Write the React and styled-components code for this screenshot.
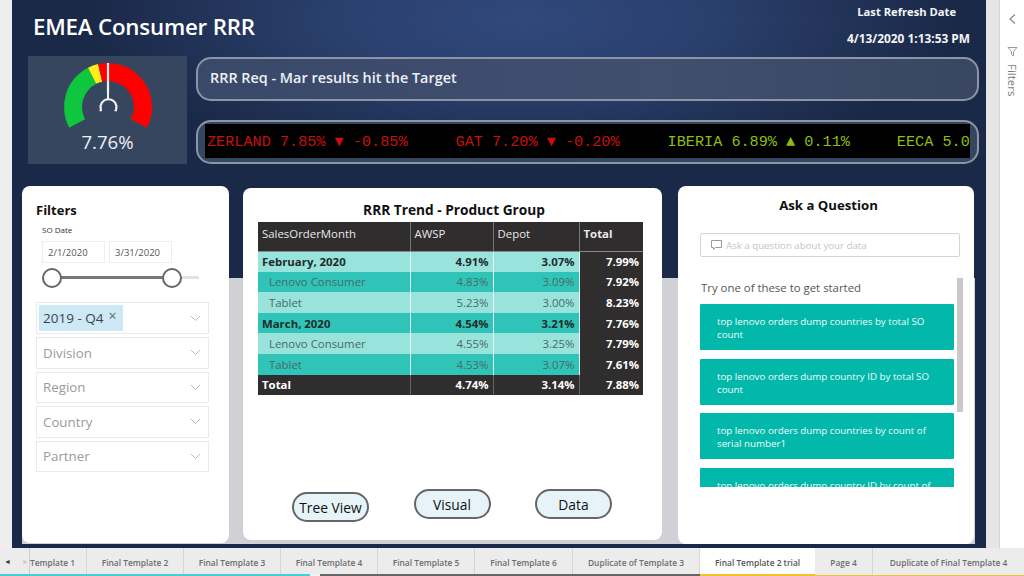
import React from "react";
import styled, { createGlobalStyle } from "styled-components";

const Global = createGlobalStyle`
  html, body { margin: 0; padding: 0; width: 1024px; height: 576px; overflow: hidden; background: #efefef; }
  * { box-sizing: border-box; }
  body { font-family: "Open Sans", "Noto Sans", sans-serif; }
`;

const Page = styled.div`
  width: 1024px; height: 576px; display: flex; flex-direction: column; overflow: hidden;
`;
const Top = styled.div`
  height: 548px; display: flex; flex: none;
`;
const Gutter = styled.div`
  width: 12px; background: #eeeeee; flex: none;
`;
const Report = styled.main`
  width: 974px; flex: none; display: flex; flex-direction: column;
  background: radial-gradient(ellipse 430px 150px at 510px 20px, #30497c 0%, #2a3f6c 45%, #1b2948 100%);
`;
const SidePane = styled.aside`
  width: 38px; flex: none; display: flex; background: #e6e6e6; padding-left: 13px;
`;
const SideInner = styled.div`
  flex: 1; background: #fff; border-left: 1px solid #d4d4d4; display: flex; flex-direction: column;
  align-items: center; padding-top: 13px; color: #777;
`;
const SideLabel = styled.span`
  writing-mode: vertical-rl; font-size: 11.5px; color: #7c7c7c; margin-top: 7px;
`;
const Header = styled.header`
  height: 56px; display: flex; justify-content: space-between; padding: 0 16px 0 21px; flex: none;
`;
const Title = styled.h1`
  margin: 12px 0 0; font-size: 22.3px; line-height: 30px; font-weight: 600; color: #fff; letter-spacing: -0.2px;
`;
const RefreshBlock = styled.div`
  display: flex; flex-direction: column; align-items: flex-end; color: #f4f5f8; font-weight: 700; font-size: 11.2px;
`;
const RefreshLabel = styled.span`
  margin: 5px 14px 0 0; line-height: 14px;
`;
const RefreshValue = styled.span`
  margin-top: 12px; line-height: 14px; font-size: 11.9px;
`;
const KpiRow = styled.section`
  display: flex; gap: 9px; padding: 0 8px 0 16px; height: 108px; flex: none;
`;
const GaugeCard = styled.div`
  width: 159px; flex: none; background: #37465f; display: flex; flex-direction: column; align-items: center;
  padding-top: 6px; color: #eef0f4;
`;
const GaugeValue = styled.div`
  font-size: 18.6px; line-height: 24px; margin-top: -1px; font-weight: 400;
`;
const Banners = styled.div`
  flex: 1; display: flex; flex-direction: column; gap: 19px; padding-top: 1px;
`;
const Pill = styled.div`
  height: 44px; border: 2px solid #8d95a5; border-radius: 15px; display: flex; align-items: center; padding-bottom: 3px;
  background: linear-gradient(90deg, #39496a, #414f6f 60%, #384663);
`;
const PillText = styled.span`
  margin-left: 12px; color: #eef0f4; font-size: 14.4px; font-weight: 600;
`;
const TickerFrame = styled.div`
  height: 44px; border: 2px solid #8d95a5; border-radius: 15px; padding: 2px 7px; display: flex; background: #37465f;
`;
const TickerScreen = styled.div`
  flex: 1; background: #000; display: flex; align-items: center; overflow: hidden; white-space: nowrap; padding-top: 1px;
  font-family: "Liberation Mono", "DejaVu Sans Mono", monospace; height: 34px;
`;
const TickerItem = styled.span`
  color: ${(p) => p.$color}; margin-left: ${(p) => p.$gap}px; flex: none; font-size: 15.2px;
`;
const Body = styled.section`
  height: 362px; margin-top: 22px; padding: 0 11px 4px 10px; display: flex; flex: none;
  background: linear-gradient(to bottom, transparent 92px, #cfd1d5 92px, #cfd1d5 358px, transparent 358px);
  background-size: 953px 100%; background-position: 10px 0; background-repeat: no-repeat;
`;
const Card = styled.div`
  background: #fff; border-radius: 8px; display: flex; flex-direction: column; position: relative;
`;
const FilterCard = styled(Card)`
  width: 207px; height: 357px; padding: 15px 20px 0 14px; flex: none;
`;
const CardHeading = styled.h2`
  margin: 0; font-size: 13px; line-height: 18px; font-weight: 700; color: #111;
`;
const SmallLabel = styled.div`
  font-size: 8px; line-height: 12px; color: #333; margin: 5px 0 0 6px;
`;
const DateRow = styled.div`
  display: flex; gap: 4px; margin: 5px 0 0 6px;
`;
const DateBox = styled.div`
  width: 63px; height: 22px; border: 1px solid #eeeeee; font-size: 9.5px; color: #555; display: flex; align-items: center;
  padding-left: 5px;
`;
const Slider = styled.div`
  height: 20px; width: 157px; margin: 5px 0 0 6px; position: relative; flex: none;
  &::before { content: ""; position: absolute; left: 0; right: 0; top: 8px; height: 3px; background: #e2e2e2; }
  &::after { content: ""; position: absolute; left: 10px; width: 120px; top: 8px; height: 3px; background: #777; }
`;
const Thumb = styled.span`
  position: absolute; left: ${(p) => p.$left}px; top: 0; width: 20px; height: 20px; border-radius: 50%;
  border: 2px solid #666; background: #fff; z-index: 1;
`;
const Drops = styled.div`
  display: flex; flex-direction: column; gap: 3px; margin-top: 14px;
`;
const Drop = styled.div`
  height: ${(p) => p.$h}px; border: 1.5px solid #eaeaea; display: flex; align-items: center; justify-content: space-between;
  padding: 0 7px 0 6px; color: #9a9a9a; font-size: 13.3px;
`;
const Chip = styled.span`
  background: #cce9f5; color: #3a4450; height: 26px; width: 84px; margin-left: -4px; display: flex; align-items: center;
  padding-left: 4px; font-size: 13.5px; gap: 5px;
`;
const ChipX = styled.span`
  font-size: 14px; color: #666; margin-top: -4px; line-height: 14px;
`;
const TableCard = styled(Card)`
  width: 419px; height: 352px; margin: 2px 0 0 14px; padding: 12px 19px 0 15px; flex: none;
`;
const CenterHeading = styled(CardHeading)`
  text-align: center; font-size: 13.7px; line-height: 20px; padding-left: 7px;
`;
const Table = styled.table`
  border-collapse: collapse; table-layout: fixed; width: 385px; margin-top: 2px; font-size: 11.4px;
`;
const HeadCell = styled.th`
  background: #2f2d2d; color: #e8e8e8; font-weight: ${(p) => (p.$bold ? 700 : 400)}; text-align: left; height: 29px;
  padding: 0 0 5px 4px; border-right: 1px solid #777; border-bottom: 1px solid #888; font-size: 11.4px;
  &:last-child { border-right: none; }
`;
const RowCell = styled.td`
  height: 20.6px; padding: 0 4px; text-align: ${(p) => (p.$label ? "left" : "right")};
  padding-left: ${(p) => (p.$indent ? 11 : 4)}px;
  background: ${(p) => (p.$dark ? "#2f2d2d" : p.$shade ? "#30c4b8" : "#98e3db")};
  color: ${(p) => (p.$dark ? "#fff" : p.$strong ? "#1f2b2b" : "#4a6a67")};
  font-weight: ${(p) => (p.$strong || p.$dark ? 700 : 400)};
  white-space: nowrap;
  border-right: ${(p) => (p.$dark ? "1px solid #666" : "1px solid #e8f7f5")};
  &:last-child { border-right: none; }
`;
const Buttons = styled.div`
  margin-top: auto; display: flex; gap: 44.5px; padding: 0 0 18px 34px; align-items: flex-start;
`;
const ViewButton = styled.button`
  width: 77px; height: ${(p) => p.$h}px; margin-top: ${(p) => p.$offset}px; border-radius: 16px; border: 2px solid #666;
  background: #e6f4fa; font-family: inherit; font-size: 13.8px; color: #111; padding: 0;
`;
const AskCard = styled(Card)`
  width: 296px; height: 358px; margin-left: 16px; padding: 10px 20px 0 22px; flex: none;
`;
const AskHeading = styled(CardHeading)`
  text-align: center; line-height: 18px; padding-left: 3px; font-size: 13.2px;
`;
const AskInput = styled.div`
  margin-top: 19px; height: 24px; width: 260px; border: 1.5px solid #d4d4d4; border-radius: 2px; display: flex; align-items: center;
  gap: 3px; padding-left: 9px; font-size: 9.7px; color: #c4c4c4;
`;
const TryLine = styled.div`
  margin-top: 23px; font-size: 11.4px; line-height: 16px; color: #555; padding-left: 1px;
`;
const Scrollbar = styled.span`
  position: absolute; left: 279px; top: 92px; width: 6px; height: 134px; background: #c9c9c9;
`;
const Suggestions = styled.div`
  margin-top: 8px; width: 254px; height: 183px; overflow: hidden; display: flex; flex-direction: column; gap: 8.6px;
`;
const Suggestion = styled.div`
  flex: none; height: 46px; background: #01b8aa; color: #f2fbfa; font-size: 9.75px; line-height: 13px;
  padding: 11px 20px 0 17px; border-radius: 1px;
`;
const Tabs = styled.nav`
  height: 28px; display: flex; flex: none; background: #ececec; position: relative;
  &::before { content: ""; position: absolute; left: 0; right: 0; bottom: 0; height: 1px; background: #f3c22e; z-index: 2; }
  &::after {
    content: ""; position: absolute; left: 0; width: 815px; bottom: 0; height: 2px; z-index: 3;
    background: linear-gradient(90deg, #45cfd2 310px, #f4f4f4 310px, #f4f4f4 320px, #666 320px, #666 700px, #f3c22e 700px);
  }
`;
const Arrows = styled.div`
  width: 30px; flex: none; display: flex; align-items: center; gap: 11px; padding: 0 0 1px 4px; border-right: 1px solid #cfcfcf; font-size: 7px; color: #333;
`;
const ArrowOff = styled.span` color: #c8c8c8; `;
const Tab = styled.div`
  width: ${(p) => p.$w}px; flex: none; display: flex; align-items: center; justify-content: ${(p) => (p.$clip ? "flex-start" : "center")};
  font-size: 8.4px; font-weight: 600;
  color: ${(p) => (p.$active ? "#555" : "#6d6d6d")}; background: ${(p) => (p.$active ? "#fff" : "transparent")};
  border-right: ${(p) => (p.$active ? "none" : "1px solid #d6d6d6")};
  white-space: nowrap;
  &:last-child { border-right: none; }
`;

function Gauge() {
  const cx = 78, cy = 45, R = 44, r = 26;
  const pt = (rad, deg) => {
    const a = (deg * Math.PI) / 180;
    return `${(cx + rad * Math.sin(a)).toFixed(1)} ${(cy - rad * Math.cos(a)).toFixed(1)}`;
  };
  const seg = (from, to, fill) => (
    <path fill={fill} d={`M${pt(r, from)} L${pt(R, from)} A${R} ${R} 0 ${to - from > 180 ? 1 : 0} 1 ${pt(R, to)} L${pt(r, to)} A${r} ${r} 0 ${to - from > 180 ? 1 : 0} 0 ${pt(r, from)} Z`} />
  );
  return (
    <svg width="156" height="69" viewBox="0 0 156 69">
      {seg(-118, -27, "#0fc63f")}
      {seg(-27, -13, "#ffee1e")}
      {seg(-13, 118, "#ff0000")}
      <path d="M78 1 V31" stroke="#f2f2f2" strokeWidth="2.2" fill="none" />
      <path d="M71 48 A8 8 0 1 1 86 48 M78 31 V38" stroke="#f2f2f2" strokeWidth="2" fill="none" />
      <path d="M69.500 48.500 h2.500 M84.500 48.500 h2.500" stroke="#f2f2f2" strokeWidth="1.500" />
    </svg>
  );
}

const Chevron = () => (
  <svg width="11" height="7" viewBox="0 0 11 7" fill="none" stroke="#bdbdbd" strokeWidth="1"><path d="M1 1 L5.500 5.500 L10 1" /></svg>
);

const rows = [
  { name: "February, 2020", a: "4.91%", d: "3.07%", t: "7.99%", strong: true },
  { name: "Lenovo Consumer", a: "4.83%", d: "3.09%", t: "7.92%", shade: true, indent: true },
  { name: "Tablet", a: "5.23%", d: "3.00%", t: "8.23%", indent: true },
  { name: "March, 2020", a: "4.54%", d: "3.21%", t: "7.76%", strong: true, shade: true },
  { name: "Lenovo Consumer", a: "4.55%", d: "3.25%", t: "7.79%", indent: true },
  { name: "Tablet", a: "4.53%", d: "3.07%", t: "7.61%", shade: true, indent: true },
];

const tabs = [
  ["Template 1", 57], ["Final Template 2", 97], ["Final Template 3", 97], ["Final Template 4", 97],
  ["Final Template 5", 97], ["Final Template 6", 98], ["Duplicate of Template 3", 127],
  ["Final Template 2 trial", 115], ["Page 4", 58], ["Duplicate of Final Template 4", 151],
];

export default function App() {
  return (
    <Page>
      <Global />
      <Top>
        <Gutter />
        <Report>
          <Header>
            <Title>EMEA Consumer RRR</Title>
            <RefreshBlock>
              <RefreshLabel>Last Refresh Date</RefreshLabel>
              <RefreshValue>4/13/2020 1:13:53 PM</RefreshValue>
            </RefreshBlock>
          </Header>
          <KpiRow>
            <GaugeCard>
              <Gauge />
              <GaugeValue>7.76%</GaugeValue>
            </GaugeCard>
            <Banners>
              <Pill><PillText>RRR Req - Mar results hit the Target</PillText></Pill>
              <TickerFrame>
                <TickerScreen>
                  <TickerItem $color="#c80f0f" $gap={2}>ZERLAND 7.85% ▼ -0.85%</TickerItem>
                  <TickerItem $color="#c80f0f" $gap={48}>GAT 7.20% ▼ -0.20%</TickerItem>
                  <TickerItem $color="#8fbc14" $gap={48}>IBERIA 6.89% ▲ 0.11%</TickerItem>
                  <TickerItem $color="#8fbc14" $gap={47}>EECA 5.0</TickerItem>
                </TickerScreen>
              </TickerFrame>
            </Banners>
          </KpiRow>
          <Body>
            <FilterCard>
              <CardHeading>Filters</CardHeading>
              <SmallLabel>SO Date</SmallLabel>
              <DateRow>
                <DateBox>2/1/2020</DateBox>
                <DateBox>3/31/2020</DateBox>
              </DateRow>
              <Slider>
                <Thumb $left={0} />
                <Thumb $left={120} />
              </Slider>
              <Drops>
                <Drop $h={32}>
                  <Chip>2019 - Q4 <ChipX>×</ChipX></Chip>
                  <Chevron />
                </Drop>
                {["Division", "Region", "Country", "Partner"].map((n) => (
                  <Drop key={n} $h={31.500}>{n}<Chevron /></Drop>
                ))}
              </Drops>
            </FilterCard>
            <TableCard>
              <CenterHeading>RRR Trend - Product Group</CenterHeading>
              <Table>
                <colgroup>
                  <col style={{ width: 152 }} />
                  <col style={{ width: 83 }} />
                  <col style={{ width: 86 }} />
                  <col style={{ width: 64 }} />
                </colgroup>
                <thead>
                  <tr>
                    <HeadCell>SalesOrderMonth</HeadCell>
                    <HeadCell>AWSP</HeadCell>
                    <HeadCell>Depot</HeadCell>
                    <HeadCell $bold>Total</HeadCell>
                  </tr>
                </thead>
                <tbody>
                  {rows.map((r, i) => (
                    <tr key={i}>
                      <RowCell $label $indent={r.indent} $strong={r.strong} $shade={r.shade}>{r.name}</RowCell>
                      <RowCell $strong={r.strong} $shade={r.shade}>{r.a}</RowCell>
                      <RowCell $strong={r.strong} $shade={r.shade}>{r.d}</RowCell>
                      <RowCell $dark>{r.t}</RowCell>
                    </tr>
                  ))}
                  <tr>
                    <RowCell $label $dark>Total</RowCell>
                    <RowCell $dark>4.74%</RowCell>
                    <RowCell $dark>3.14%</RowCell>
                    <RowCell $dark>7.88%</RowCell>
                  </tr>
                </tbody>
              </Table>
              <Buttons>
                <ViewButton $h={30} $offset={3}>Tree View</ViewButton>
                <ViewButton $h={30} $offset={0}>Visual</ViewButton>
                <ViewButton $h={30} $offset={0}>Data</ViewButton>
              </Buttons>
            </TableCard>
            <AskCard>
              <AskHeading>Ask a Question</AskHeading>
              <AskInput>
                <svg width="13" height="12" viewBox="0 0 13 12" fill="none" stroke="#9a9a9a" strokeWidth="1">
                  <path d="M1.500 1.500 H11.500 V8.500 H5.500 L3.500 10.500 V8.500 H1.500 Z" />
                </svg>
                Ask a question about your data
              </AskInput>
              <TryLine>Try one of these to get started</TryLine>
              <Suggestions>
                <Suggestion>top lenovo orders dump countries by total SO count</Suggestion>
                <Suggestion>top lenovo orders dump country ID by total SO count</Suggestion>
                <Suggestion>top lenovo orders dump countries by count of serial number1</Suggestion>
                <Suggestion>top lenovo orders dump country ID by count of serial number1</Suggestion>
              </Suggestions>
              <Scrollbar />
            </AskCard>
          </Body>
        </Report>
        <SidePane>
          <SideInner>
            <svg width="9" height="12" viewBox="0 0 9 12" fill="none" stroke="#8a8a8a" strokeWidth="1.300"><path d="M7 1.500 L2 6 L7 10.500" /></svg>
            <svg style={{ marginTop: 21 }} width="11" height="11" viewBox="0 0 11 11" fill="none" stroke="#9a9a9a" strokeWidth="1"><path d="M1 1.500 H10 L6.500 5.500 V10 L4.500 8.500 V5.500 Z" /></svg>
            <SideLabel>Filters</SideLabel>
          </SideInner>
        </SidePane>
      </Top>
      <Tabs>
        <Arrows>◄<ArrowOff>►</ArrowOff></Arrows>
        {tabs.map(([label, w]) => (
          <Tab key={label} $w={w} $clip={label === "Template 1"} $active={label === "Final Template 2 trial"}>{label}</Tab>
        ))}
      </Tabs>
    </Page>
  );
}
